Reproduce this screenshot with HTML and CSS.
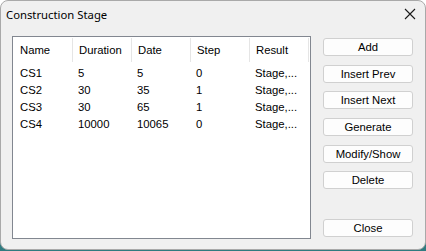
FILE: index.html
```html
<!DOCTYPE html>
<html>
<head>
<meta charset="utf-8">
<link rel="stylesheet" href="styles.css">
</head>
<body>
<div class="window">
  <div class="titlebar">
    <span class="title">Construction Stage</span>
    <svg class="close" width="12" height="12" viewBox="0 0 12 12"><path d="M1 1 L11 11 M11 1 L1 11" stroke="#1a1a1a" stroke-width="1.1" fill="none"/></svg>
  </div>
  <div class="content">
    <div class="list">
      <div class="row head">
        <div class="cell">Name</div>
        <div class="cell sep">Duration</div>
        <div class="cell sep">Date</div>
        <div class="cell sep">Step</div>
        <div class="cell sep">Result</div>
        <div class="cell sep end"></div>
      </div>
      <div class="row">
        <div class="cell">CS1</div><div class="cell">5</div><div class="cell">5</div><div class="cell">0</div><div class="cell">Stage,...</div>
      </div>
      <div class="row">
        <div class="cell">CS2</div><div class="cell">30</div><div class="cell">35</div><div class="cell">1</div><div class="cell">Stage,...</div>
      </div>
      <div class="row">
        <div class="cell">CS3</div><div class="cell">30</div><div class="cell">65</div><div class="cell">1</div><div class="cell">Stage,...</div>
      </div>
      <div class="row">
        <div class="cell">CS4</div><div class="cell">10000</div><div class="cell">10065</div><div class="cell">0</div><div class="cell">Stage,...</div>
      </div>
    </div>
    <div class="buttons">
      <button class="btn">Add</button>
      <button class="btn">Insert Prev</button>
      <button class="btn">Insert Next</button>
      <button class="btn">Generate</button>
      <button class="btn">Modify/Show</button>
      <button class="btn">Delete</button>
      <button class="btn close-btn">Close</button>
    </div>
  </div>
</div>
</body>
</html>
```
FILE: styles.css
```css
html, body {
  margin: 0;
  padding: 0;
}
body {
  width: 426px;
  height: 251px;
  background: linear-gradient(to bottom, #ffffff 0, #ffffff 240px, #2f7b80 240px, #2f7b80 251px);
  overflow: hidden;
}
.window {
  box-sizing: border-box;
  width: 426px;
  height: 250px;
  background: #f0f0f0;
  border: 1px solid #a9a9a9;
  border-radius: 8px;
  display: flex;
  flex-direction: column;
}
.titlebar {
  height: 28px;
  display: flex;
  align-items: center;
  justify-content: space-between;
  padding: 0 9px 0 5px;
  flex-shrink: 0;
}
.title {
  font-family: "Noto Sans", "Open Sans", sans-serif;
  font-size: 11.3px;
  color: #000;
  margin-top: -2px;
}
.close {
  margin-top: -3px;
}
.content {
  display: flex;
  padding: 7px 0 0 11px;
  gap: 12px;
}
.list {
  box-sizing: border-box;
  width: 299px;
  height: 203px;
  background: #fff;
  border: 1px solid #828790;
  padding-top: 1px;
  font-family: "Liberation Sans", Arial, sans-serif;
  font-size: 11.3px;
  color: #000;
}
.row {
  display: flex;
  height: 17px;
  align-items: center;
}
.row.head {
  height: 24px;
  margin-bottom: 2px;
}
.cell {
  box-sizing: border-box;
  width: 59px;
  padding-left: 7px;
  white-space: nowrap;
  flex-shrink: 0;
}
.row .cell + .cell {
  padding-left: 6px;
}
.head .cell {
  height: 24px;
  line-height: 24px;
}
.head .sep {
  border-left: 1px solid #e5e5e5;
}
.head .end {
  width: 2px;
  padding: 0;
}
.buttons {
  display: flex;
  flex-direction: column;
  width: 90px;
  padding-top: 2px;
}
.btn {
  box-sizing: border-box;
  height: 18px;
  margin-bottom: 8.7px;
  background: #fdfdfd;
  border: 1px solid #d0d0d0;
  border-radius: 3px;
  font-family: "Liberation Sans", Arial, sans-serif;
  font-size: 11.3px;
  color: #000;
  padding: 0;
  line-height: 16px;
}
.close-btn {
  margin-top: 21px;
}
```
